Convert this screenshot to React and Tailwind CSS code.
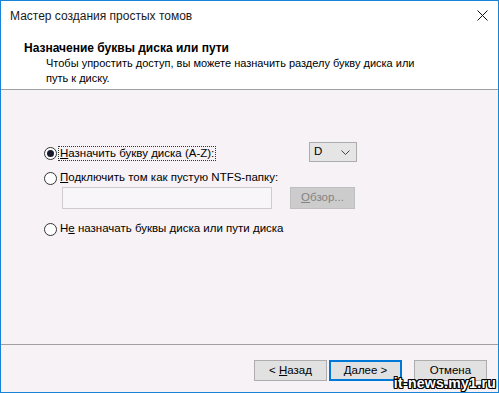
import React, { useState } from "react";

const font = { fontFamily: '"Liberation Sans", Arial, sans-serif' };

// Radio in the Windows 10 style
const Radio = ({ checked }) => (
  <span className="w-[13px] h-[13px] rounded-full border border-[#333] bg-white flex items-center justify-center shrink-0">
    {checked && <span className="w-[7px] h-[7px] rounded-full bg-[#1a1a2e]"></span>}
  </span>
);

const Btn = ({ children, primary, className = "" }) => (
  <button
    className={`w-[73px] h-[21px] flex items-center justify-center text-[11.5px] text-black bg-[#e1e1e1] ${
      primary ? "border-2 border-[#0078d7]" : "border border-[#adadad]"
    } ${className}`}
  >
    {children}
  </button>
);

export default function App() {
  const [choice, setChoice] = useState("letter");

  return (
    <div
      style={font}
      className="w-[499px] h-[393px] border border-[#1883d7] bg-white flex flex-col text-[11px] text-black overflow-hidden relative"
    >
      {/* Title bar */}
      <div className="h-[29px] flex items-center justify-between pl-[9px] pr-[9px] shrink-0">
        <span className="text-[12px] text-[#1a1a1a]">Мастер создания простых томов</span>
        <svg width="11" height="11" viewBox="0 0 11 11" className="mr-[1px]">
          <path d="M0.5 0.5 L10.5 10.5 M10.5 0.5 L0.5 10.5" stroke="#111" strokeWidth="1" />
        </svg>
      </div>

      {/* Header */}
      <div className="h-[60px] shrink-0 border-b border-[#a0a0a0] pl-[23px] pt-[11px]">
        <div className="font-bold text-[12px] leading-[14px]">Назначение буквы диска или пути</div>
        <div className="pl-[22px] text-[11px] leading-[15px] mt-[1px]">
          Чтобы упростить доступ, вы можете назначить разделу букву диска или
          <br />
          путь к диску.
        </div>
      </div>

      {/* Body */}
      <div className="flex-1 bg-[#f6f2f6] pl-[43px] pt-[52px] border-b border-[#a0a0a0] text-[11.5px]">
        <div className="flex items-center h-[20px]">
          <div className="flex items-center gap-[1px] mt-[3px] cursor-default" onClick={() => setChoice("letter")}>
            <Radio checked={choice === "letter"} />
            <span className="border border-dotted border-[#333] px-[1px] leading-[13px]">
              <u>Н</u>азначить букву диска (A-Z):
            </span>
          </div>
          <div className="ml-auto mr-[141px] w-[48px] h-[20px] bg-[#e5e5e5] border border-[#acacac] flex items-center justify-between pl-[4px] pr-[6px]">
            <span>D</span>
            <svg width="9" height="5" viewBox="0 0 9 5">
              <path d="M0.5 0.5 L4.5 4.5 L8.5 0.5" fill="none" stroke="#444" strokeWidth="1" />
            </svg>
          </div>
        </div>

        <div className="flex items-center gap-[3px] h-[16px] mt-[8px]" onClick={() => setChoice("folder")}>
          <Radio checked={choice === "folder"} />
          <span>
            <u>П</u>одключить том как пустую NTFS-папку:
          </span>
        </div>

        <div className="flex items-center mt-[1px] pl-[18px]">
          <div className="w-[210px] h-[22px] bg-[#f9f6f9] border border-[#cfcccf]"></div>
          <div className="ml-[18px] w-[65px] h-[22px] bg-[#cccccc] border border-[#bfbfbf] flex items-center justify-center text-[#838383]">
            <span>
              <u>О</u>бзор...
            </span>
          </div>
        </div>

        <div className="flex items-center gap-[3px] h-[16px] mt-[12px]" onClick={() => setChoice("none")}>
          <Radio checked={choice === "none"} />
          <span>
            Н<u>е</u> назначать буквы диска или пути диска
          </span>
        </div>
      </div>

      {/* Footer */}
      <div className="h-[47px] shrink-0 bg-[#f6f2f6] flex items-start pt-[15px] pl-[253px]">
        <Btn>
          &lt;&nbsp;<u>Н</u>азад
        </Btn>
        <Btn primary className="ml-[2px]">
          <u>Д</u>алее &gt;
        </Btn>
        <Btn className="ml-[12px]">Отмена</Btn>
      </div>

      {/* Watermark */}
      <div
        className="absolute right-[2px] bottom-[1px] text-white font-bold text-[14px] leading-[15px] tracking-[0.3px]"
        style={{
          fontFamily: '"Liberation Sans", sans-serif',
          textShadow:
            "1px 0 0 #000, -1px 0 0 #000, 0 1px 0 #000, 0 -1px 0 #000, 1px 1px 0 #000, -1px -1px 0 #000, 1px -1px 0 #000, -1px 1px 0 #000",
        }}
      >
        it-news.my1.ru
      </div>
    </div>
  );
}
